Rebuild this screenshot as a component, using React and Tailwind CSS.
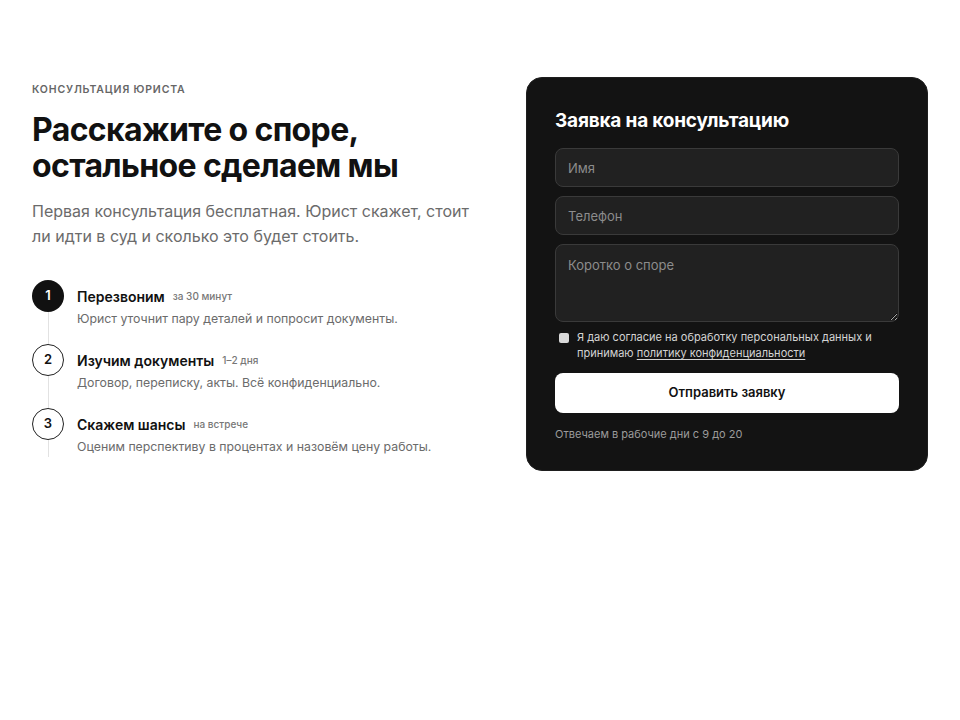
const steps = [
  { n: 1, title: 'Перезвоним', note: 'за 30 минут', text: 'Юрист уточнит пару деталей и попросит документы.', active: true },
  { n: 2, title: 'Изучим документы', note: '1–2 дня', text: 'Договор, переписку, акты. Всё конфиденциально.' },
  { n: 3, title: 'Скажем шансы', note: 'на встрече', text: 'Оценим перспективу в процентах и назовём цену работы.', last: true },
];

function Step({ step }) {
  return (
    <div className="flex gap-[13px]">
      <div className="flex flex-col items-center">
        <div
          className={
            step.active
              ? 'w-8 h-8 rounded-full bg-[#111] text-white flex items-center justify-center text-[13px] font-semibold'
              : 'w-8 h-8 rounded-full bg-white border border-[#222] text-[#111] flex items-center justify-center text-[13px] font-semibold'
          }
        >
          {step.n}
        </div>
        <div className="w-px flex-1 bg-[#e2e2e2]" />
      </div>
      <div className={step.last ? 'pb-[2px]' : 'pb-[17px]'}>
        <div className="h-8 flex items-center">
          <span className="text-[14px] font-semibold text-[#111]">{step.title}</span>
          <span className="ml-2 text-[10px] font-medium text-[#777]">{step.note}</span>
        </div>
        <p className="-mt-px text-[12.3px] leading-4 text-[#6b6b6b]">{step.text}</p>
      </div>
    </div>
  );
}

function Field({ placeholder }) {
  return (
    <input
      placeholder={placeholder}
      className="w-full h-[39px] rounded-lg bg-[#212121] border border-[#3a3a3a] px-3 text-[13px] text-white placeholder:text-[#8c8c8c] outline-none"
    />
  );
}

export default function App() {
  return (
    <div className="min-h-[720px] bg-white" style={{ fontFamily: 'Inter, "Noto Sans", sans-serif' }}>
      <div className="px-8 pt-[77px] grid grid-cols-[1fr_402px] gap-8 items-start">
        <div className="pt-[5px]">
          <div className="text-[10.5px] font-semibold tracking-[0.08em] uppercase text-[#666] leading-4">
            Консультация юриста
          </div>
          <h1 className="mt-[14px] text-[32px] leading-[36px] font-bold tracking-[-0.02em] text-[#111]">
            Расскажите о споре,
            <br />
            остальное сделаем мы
          </h1>
          <p className="mt-[15px] max-w-[445px] text-[16px] leading-[25px] text-[#6b6b6b]">
            Первая консультация бесплатная. Юрист скажет, стоит ли идти в суд и сколько это будет стоить.
          </p>
          <div className="mt-[31px] flex flex-col">
            {steps.map((s) => (
              <Step key={s.n} step={s} />
            ))}
          </div>
        </div>

        <div className="rounded-2xl bg-[#131313] border border-[#1e1e1e] px-7 pt-[31px] pb-[28px]">
          <h2 className="text-[19px] font-bold text-white leading-6 tracking-[-0.01em]">Заявка на консультацию</h2>
          <div className="mt-[15px] flex flex-col gap-[9px]">
            <Field placeholder="Имя" />
            <Field placeholder="Телефон" />
            <textarea
              placeholder="Коротко о споре"
              className="w-full h-[78px] rounded-lg bg-[#212121] border border-[#3a3a3a] px-3 py-[11px] text-[13px] text-white placeholder:text-[#8c8c8c] outline-none resize-y"
            />
          </div>
          <label className="mt-[7px] flex gap-2 items-start px-1">
            <span className="mt-[4px] w-[10px] h-[10px] shrink-0 bg-[#d9d9d9] rounded-[2px]" />
            <span className="text-[11px] leading-4 text-[#d4d4d4]">
              Я даю согласие на обработку персональных данных и принимаю{' '}
              <span className="underline underline-offset-2">политику конфиденциальности</span>
            </span>
          </label>
          <button className="mt-[12px] w-full h-[40px] rounded-lg bg-white text-[#111] text-[13px] font-semibold">
            Отправить заявку
          </button>
          <p className="mt-[13px] text-[11px] text-[#9b9b9b] leading-4">Отвечаем в рабочие дни с 9 до 20</p>
        </div>
      </div>
    </div>
  );
}
